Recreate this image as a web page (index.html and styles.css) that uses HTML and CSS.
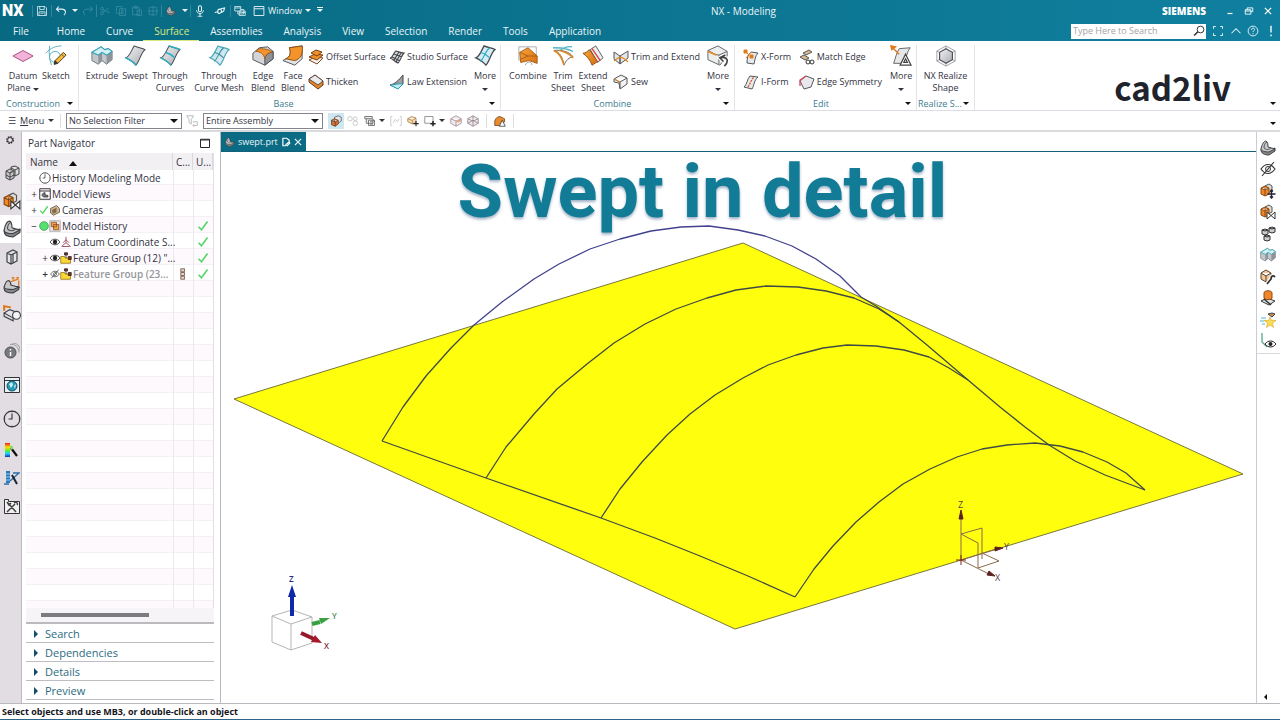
FILE: index.html
```html
<!DOCTYPE html>
<html lang="en">
<head>
<meta charset="utf-8">
<title>NX - Modeling</title>
<link rel="stylesheet" href="styles.css">
</head>
<body>
<svg class="sprite" aria-hidden="true">
  <defs>
    <linearGradient id="metal" x1="0" y1="0" x2="1" y2="1"><stop offset="0" stop-color="#f4f4f6"/><stop offset="1" stop-color="#a9abb0"/></linearGradient>
    <linearGradient id="ice" x1="0" y1="0" x2="1" y2="1"><stop offset="0" stop-color="#b6e3ec"/><stop offset="1" stop-color="#e8ecf0"/></linearGradient>
    <linearGradient id="amber" x1="0" y1="0" x2="1" y2="1"><stop offset="0" stop-color="#f7a53c"/><stop offset="1" stop-color="#d96f10"/></linearGradient>
    <linearGradient id="rainbow" x1="0" y1="0" x2="0" y2="1"><stop offset="0" stop-color="#d22"/><stop offset=".3" stop-color="#fd0"/><stop offset=".55" stop-color="#5e3"/><stop offset=".75" stop-color="#2cf"/><stop offset="1" stop-color="#13a"/></linearGradient>
  </defs>

  <symbol id="save" viewBox="0 0 16 16"><path d="M2 2h10l2 2v10H2zM5 2v4h6V2M4 14V9h8v5M6 11h4" fill="none" stroke="currentColor"/></symbol>
  <symbol id="undo" viewBox="0 0 16 16"><path d="M5 2 2 5.500l3.500 3.500M2 5.500h7c6 0 6 5 3 8" fill="none" stroke="currentColor" stroke-width="1.400"/></symbol>
  <symbol id="redo" viewBox="0 0 16 16"><path d="m11 2 3 3.500L10.500 9M14 5.500H7c-6 0-6 5-3 8" fill="none" stroke="currentColor" stroke-width="1.200"/></symbol>
  <symbol id="cut" viewBox="0 0 16 16"><path d="M5 6 14 10M5 10l8-6" fill="none" stroke="currentColor"/><circle cx="4" cy="5" r="2" fill="none" stroke="currentColor"/><circle cx="4" cy="11" r="2" fill="none" stroke="currentColor"/></symbol>
  <symbol id="copy" viewBox="0 0 16 16"><path d="M2 2h7v9H2zM6 5h8v9H6zM8 8h4M8 11h4" fill="none" stroke="currentColor"/></symbol>
  <symbol id="paste" viewBox="0 0 16 16"><path d="M2 3h9v10H2zM5 1.500h3v3H5zM8 7h6v7H8z" fill="none" stroke="currentColor"/></symbol>
  <symbol id="target" viewBox="0 0 16 16"><path d="M3 3h10v10H3zM8 1v14M1 8h14" fill="none" stroke="currentColor"/></symbol>
  <symbol id="mic" viewBox="0 0 16 16"><rect x="6" y="1" width="4" height="8" rx="2" fill="none" stroke="currentColor" stroke-width="1.400"/><path d="M3.500 7c0 6 9 6 9 0M8 11v4M5 15h6" fill="none" stroke="currentColor" stroke-width="1.200"/></symbol>
  <symbol id="loop" viewBox="0 0 16 16"><path d="M5 9 1 10M5 9c0-5 5-4 5-1s-5 5-5 1zM9 5l5-1-1 4-3 2" fill="none" stroke="currentColor" stroke-width="1.500"/></symbol>
  <symbol id="cascade" viewBox="0 0 16 16"><path d="M1 2h8v6H1zM1 4h8M5 8v4h8V6H9M7 8h8v6H7zM7 10h8" fill="none" stroke="currentColor"/></symbol>
  <symbol id="window" viewBox="0 0 16 16"><path d="M1.500 2h13v12h-13zM1.500 5h13" fill="none" stroke="currentColor" stroke-width="1.200"/></symbol>
  <symbol id="min" viewBox="0 0 16 16"><path d="M4 12h8" stroke="currentColor" stroke-width="2"/></symbol>
  <symbol id="restore" viewBox="0 0 16 16"><path d="M5 6V3h9v6h-3M2 6h9v7H2zM2 8h9" fill="none" stroke="currentColor" stroke-width="1.400"/></symbol>
  <symbol id="close" viewBox="0 0 16 16"><path d="m3 3 10 10M13 3 3 13" stroke="currentColor" stroke-width="2"/></symbol>
  <symbol id="full" viewBox="0 0 16 16"><path d="M2 5V2h3M11 2h3v3M14 11v3h-3M5 14H2v-3" fill="none" stroke="currentColor" stroke-width="1.300"/></symbol>
  <symbol id="up" viewBox="0 0 16 16"><path d="m2 11 6-6 6 6" fill="none" stroke="currentColor" stroke-width="1.400"/></symbol>
  <symbol id="help" viewBox="0 0 16 16"><circle cx="8" cy="8" r="6.500" fill="none" stroke="currentColor" stroke-width="1.200"/><path d="M6 6.500c0-3 4-3 4-.5 0 1.500-2 1.500-2 3.500M8 11v1.300" fill="none" stroke="currentColor" stroke-width="1.300"/></symbol>
  <symbol id="bang" viewBox="0 0 16 16"><path d="M8 1v9M8 12.500V15" stroke="currentColor" stroke-width="2"/></symbol>
  <symbol id="magnify" viewBox="0 0 16 16"><circle cx="10" cy="6" r="4.500" fill="none" stroke="#333" stroke-width="1.300"/><path d="m6.500 9-5 5" stroke="#333" stroke-width="2.200"/></symbol>

  <symbol id="plane" viewBox="0 0 24 24"><path d="m1 12 11-6 11 6-11 6z" fill="#f3b3d8" stroke="#a0487c"/></symbol>
  <symbol id="sketch" viewBox="0 0 24 24"><path d="M1 9C6 3 12 1 18 1M5 1c-1 8 0 15 2 21" fill="none" stroke="#53a9bd"/><circle cx="11" cy="13" r="6" fill="#fff" stroke="#53a9bd"/><path d="m10 21 1-4L20 8l3 3-9 9z" fill="#f5b73c" stroke="#4b3c22"/><path d="m10 21 1-4 3 3zM18 10l3 3" fill="#333" stroke="#333" stroke-width=".7"/></symbol>
  <symbol id="extrude" viewBox="0 0 24 24"><path d="M1 8 11 2l4 3 4-1 4 3v9l-6 5-5-4-4 4-7-4z" fill="#c3c7cb" stroke="#6b747a"/><path d="M8 11v10l4-4V8zM17 11v10l6-5V7z" fill="#8e9499"/><path d="M1 8 11 2l4 3 4-1 4 3-6 4-5-3-4 3z" fill="#d3f0f5" stroke="#35a3b8" stroke-width="1.200"/></symbol>
  <symbol id="swept" viewBox="0 0 24 24"><path d="M2 14C6 13 8 6 11 1c4 2 9 2 12 4-5 4-6 13-10 17-3-4-7-6-11-8z" fill="url(#metal)" stroke="#45484e" stroke-width="1.100"/><path d="M2 14c4 2 8 4 11 8" stroke="#29aec4" stroke-width="1.800" fill="none"/></symbol>
  <symbol id="curves" viewBox="0 0 24 24"><path d="M2 14C6 13 8 6 11 1c4 2 9 2 12 4-5 4-6 13-10 17-3-4-7-6-11-8z" fill="url(#metal)" stroke="#45484e" stroke-width="1.100"/><path d="M2 14c4 2 8 4 11 8M7 8c4 1 7 3 10 6M11 1c4 2 9 2 12 4" stroke="#29aec4" stroke-width="1.600" fill="none"/></symbol>
  <symbol id="mesh" viewBox="0 0 24 24"><path d="M2 14C6 13 8 6 11 1c4 2 9 2 12 4-5 4-6 13-10 17-3-4-7-6-11-8z" fill="url(#ice)" stroke="#4aa9bb" stroke-width="1.300"/><path d="M7 8c4 1 7 3 10 6M17 3c-5 4-6 11-10 15" stroke="#3a8fa2" stroke-width="1.100" fill="none"/></symbol>
  <symbol id="edgeblend" viewBox="0 0 24 24"><path d="M1 9 8 3l9-1 6 5v8l-9 7-13-6z" fill="#d3d5d8" stroke="#4d4d52"/><path d="M14 22v-7c0-4 5-7 9-8v8z" fill="#8e9196" stroke="#4d4d52"/><path d="M4 7 8 4c6 0 12 1 14 4-4 0-8 3-8 7C13 10 9 7 4 7z" fill="#f2932b" stroke="#a5590f"/></symbol>
  <symbol id="faceblend" viewBox="0 0 24 24"><path d="M8 3 22 1v14l-8 7-13-5 5-3c3-2 4-6 2-11z" fill="#e1e2e4" stroke="#4d4d52"/><path d="m8 3 14-2c1 8-1 14-8 16L4 15c5-2 6-6 4-12z" fill="#f2932b" stroke="#8a4a10"/></symbol>
  <symbol id="blueSurf" viewBox="0 0 24 24"><path d="M2 14C6 13 8 6 11 1c4 2 9 2 12 4-5 4-6 13-10 17-3-4-7-6-11-8z" fill="#d6ebf3" stroke="#45484e" stroke-width="1.400"/><path d="M7 8c4 1 7 3 10 6M17 3c-5 4-6 11-10 15" stroke="#29aec4" stroke-width="1.200" fill="none"/></symbol>
  <symbol id="combine" viewBox="0 0 24 24"><path d="M2 2h19v18M2 2v15" fill="none" stroke="#a5a8ac"/><path d="M3 8 12 3l10 9v8l-9-3-9 2z" fill="url(#amber)" stroke="#a65a14"/><path d="m3 8 9 4 10 0M3 16l9-4" fill="none" stroke="#a65a14"/><path d="M9 22c3-6 8-3 7 0" fill="none" stroke="#999"/></symbol>
  <symbol id="trim" viewBox="0 0 24 24"><path d="M1 3c8 0 14 0 22 4M6 8c6-5 10-7 16-6" fill="none" stroke="#53b3c6" stroke-width="1.500"/><path d="M2 6c6 1 10 8 11 16 2-5 6-9 10-9C19 7 10 5 2 6z" fill="#fff" stroke="#555"/><path d="M2 6c5 2 9 8 11 16M8 6c6 1 11 4 15 8" fill="none" stroke="#e58a22" stroke-width="1.800"/></symbol>
  <symbol id="extend" viewBox="0 0 24 24"><path d="m9 5 6-4 8 13-6 5z" fill="#eceef0" stroke="#555"/><path d="M1 9c3 0 5-2 7-4l9 13-6 4C9 16 5 12 1 9z" fill="url(#amber)" stroke="#8a4a10"/><path d="m11 4 9 13" stroke="#d33" stroke-width="1.300"/></symbol>
  <symbol id="boxback" viewBox="0 0 24 24"><path d="M1 6 12 1l10 6v5l-8 10-13-6z" fill="#eceded" stroke="#5b5d62"/><path d="M1 6c5 2 7 5 12 5l9-4M13 11v10" fill="none" stroke="#5b5d62"/><path d="m1 7 9 4" stroke="#e58a22" stroke-width="1.800"/><path d="m20 11-6 3 4 4M14 14c9-2 10 4 5 9" fill="none" stroke="#fff" stroke-width="4"/><path d="m20 11-6 3 4 4M14 14c9-2 10 4 5 9" fill="none" stroke="#444" stroke-width="1.800"/></symbol>
  <symbol id="editmore" viewBox="0 0 24 24"><path d="M4 20C6 14 7 9 10 4l12-1c-4 5-4 11-6 17z" fill="#e6e7e9" stroke="#5b5d62"/><path d="m1 1 9 9M1 1l5 1-4 3z" stroke="#e07a18" stroke-width="1.600" fill="#e07a18"/><path d="m17 10 6 12H11zM17 15l2 4h-4z" fill="#fff" stroke="#444" stroke-width="1.300"/></symbol>
  <symbol id="realize" viewBox="0 0 24 24"><path d="m12 1 10 5.500v11L12 23 2 17.500v-11zM12 1v22M2 6.500l20 11M22 6.500l-20 11" fill="none" stroke="#9a9da4"/><path d="m12 4 7 4v8l-7 4-7-4V8z" fill="url(#metal)" stroke="#505258" stroke-width="1.300"/></symbol>

  <symbol id="offset" viewBox="0 0 16 16"><path d="m1 11 6-3 8 1-6 6z" fill="#f6f0ea" stroke="#7a4a26"/><path d="m1 8 6-3 8 1-6 5z" fill="#f0902a" stroke="#7a3c10"/><path d="m3 4 5-3 6 2-5 4z" fill="#f0902a" stroke="#7a3c10"/></symbol>
  <symbol id="thicken" viewBox="0 0 16 16"><path d="m1 5 6-4 8 6v4l-5 4-9-7z" fill="#e98526" stroke="#5f3b22"/><path d="m1 5 6-4 8 6-5 4z" fill="#e9eaec" stroke="#5f4b42"/></symbol>
  <symbol id="studio" viewBox="0 0 16 16"><path d="M1 9c3 0 3-5 6-7 3 1 5 2 8 2-3 3-3 7-6 10-3-1-5-4-8-5zM3 8l8 4M5 5l8 3M10 3 5 11M12 4 7 13" fill="#dcdde0" stroke="#44464a" stroke-width="1.100"/></symbol>
  <symbol id="law" viewBox="0 0 16 16"><path d="M1 11C6 10 10 6 14 1v9l-6 4z" fill="#9da0a5" stroke="#44464a"/><path d="M1 11c4 0 9-2 13-1l-5 5z" fill="#bfeaf1" stroke="#2a9ab0"/></symbol>
  <symbol id="trimext" viewBox="0 0 16 16"><path d="M1 3l6 4v8L1 10zM7 7l8-5v7l-8 6z" fill="#e4e5e7" stroke="#55575c"/><path d="M1 12c6-6 9-4 14 1" fill="none" stroke="#e58a22" stroke-width="1.200"/></symbol>
  <symbol id="sew" viewBox="0 0 16 16"><path d="M1 5l7-4 6 3v6l-7 5-1-6-5-1zM1 5l6 3 7-4M7 8v6" fill="#f3f3f4" stroke="#55575c"/><path d="m1 5 6 3" stroke="#e58a22"/></symbol>
  <symbol id="xform" viewBox="0 0 16 16"><path d="M4 14c0-5 1-9 4-11l7 1c-3 3-3 7-4 11z" fill="#e8e9ea" stroke="#55575c"/><path d="m2 2 4 4M8 3 3 9M1 1h3v3H1zM7 6h3v3H7z" stroke="#e07a18" fill="#e07a18"/></symbol>
  <symbol id="iform" viewBox="0 0 16 16"><path d="M1 13c3-2 3-8 6-11l8 1c-4 3-4 9-6 12z" fill="#e8e9ea" stroke="#55575c"/><path d="M5 13c2-3 3-7 6-10" stroke="#d3562c" stroke-width="1.300" fill="none" stroke-dasharray="2 1"/></symbol>
  <symbol id="match" viewBox="0 0 16 16"><path d="m4 4 6-3 3 2-6 3zM1 8l4-2 5 3-4 2z" fill="#d8b98a" stroke="#55575c"/><circle cx="9" cy="13" r="2" fill="none" stroke="#333"/><circle cx="13" cy="13" r="2" fill="none" stroke="#333"/></symbol>
  <symbol id="symm" viewBox="0 0 16 16"><path d="m1 7 6-5 8 3-3 8-7 2z" fill="#e9e9eb" stroke="#55575c"/><path d="M1 12V6l6-4" fill="none" stroke="#d9445c" stroke-width="1.300"/></symbol>

  <symbol id="gear" viewBox="0 0 16 16"><circle cx="8" cy="8" r="5" fill="none" stroke="#333" stroke-width="2.600" stroke-dasharray="2.500 1.400"/><circle cx="8" cy="8" r="3.800" fill="#eee" stroke="#333" stroke-width="1.400"/></symbol>
  <symbol id="cubes" viewBox="0 0 16 16"><path d="m7 2 4-1 4 2v6l-4 2-4-2zM7 3l4 2 4-2M11 5v6" fill="#ddd" stroke="#444"/><path d="m2 6 4-2 4 2v7l-4 2-4-2zM2 6l4 2 4-2M6 8v7M2 10l4 2 4-2" fill="#c3c4c6" stroke="#444"/></symbol>
  <symbol id="constraint" viewBox="0 0 16 16"><path d="m5 3 4-2 3 2v5l-4 2-3-2z" fill="#ddd" stroke="#555"/><path d="m1 5 4-2 4 2v6l-4 2-4-2zM1 5l4 2 4-2M5 7v6" fill="#f0862a" stroke="#8a4a10"/><path d="M7 8v7l8-7v7z" fill="#fff" stroke="#333"/></symbol>
  <symbol id="part" viewBox="0 0 16 16"><path d="M1 10c0-2 2-3 3-3l5 3 6-2v3l-6 4c-5 0-8-2-8-5z" fill="#85878b" stroke="#3f4145"/><path d="M1 9c1-5 3-8 5-8 2 1 2 4 2 6l7 2-6 3c-4 0-8-1-8-3z" fill="#c6c8ca" stroke="#3f4145"/><path d="M4 8c0-3 1-5 3-6M4 8c2 2 5 2 7 0" fill="none" stroke="#55575b"/></symbol>
  <symbol id="book" viewBox="0 0 16 16"><path d="m3 4 6-3 4 2v9l-6 3-4-2zM3 4l4 2 6-3M7 6v9M9 5v9" fill="#e3e4e6" stroke="#3f4145" stroke-width="1.200"/></symbol>
  <symbol id="partsnap" viewBox="0 0 16 16"><path d="M1 11c0-2 2-3 3-3l5 3 5-2v3l-5 3c-5 0-8-1-8-4z" fill="#85878b" stroke="#3f4145"/><path d="M1 10c1-4 2-6 4-6 2 1 2 3 2 4l7 2-5 2c-4 0-8 0-8-2z" fill="#c6c8ca" stroke="#3f4145"/><path d="m8 1 2 2m0-2L8 3m4-2 2 2m0-2-2 2M14 4v4M7 5l6-2" fill="none" stroke="#e07a18" stroke-width="1.200"/></symbol>
  <symbol id="layers" viewBox="0 0 16 16"><path d="m1 8 5-3 8 3-4 5zM1 8v3l8 4v-3" fill="#e3e4e6" stroke="#3f4145"/><circle cx="12" cy="10" r="3.500" fill="#f4f4f4" stroke="#3f4145"/><path d="M1 6V2l6 1" fill="none" stroke="#e07a18" stroke-width="1.800"/></symbol>
  <symbol id="info" viewBox="0 0 16 16"><circle cx="6.500" cy="9.500" r="5.500" fill="#77797d" stroke="#4e5054"/><path d="M6.500 9v4M6.500 6v1.500" stroke="#fff" stroke-width="1.500"/><path d="M6 1.500c5-1 9 3 9 8M8 0c5 0 8 3 8 7" fill="none" stroke="#999"/></symbol>
  <symbol id="web" viewBox="0 0 16 16"><path d="M.5.500h15v15H.5zM.5 3.500h15" fill="#e6f2f5" stroke="#333"/><circle cx="8" cy="9" r="5" fill="#2a9bb4" stroke="#134e66"/><path d="m5 7 3-2 1 3-2 3M10 9l2-2-1 5" fill="#c9f0f4"/></symbol>
  <symbol id="clock" viewBox="0 0 16 16"><circle cx="8" cy="8" r="7" fill="none" stroke="#333"/><path d="M8 3v5H5M8 1v1M8 14v1M1 8h1M14 8h1" fill="none" stroke="#333"/></symbol>
  <symbol id="palette" viewBox="0 0 16 16"><path d="M1 1h5v14H1z" fill="url(#rainbow)"/><path d="m7 6 6 8" stroke="#111" stroke-width="2.200"/><path d="M6 4c3-1 3 1 3 3L7 8z" fill="#7be052"/></symbol>
  <symbol id="manikin" viewBox="0 0 16 16"><path d="M2 1h4v12H2z" fill="#2b78b8"/><path d="M2 4h4M2 7h4M2 10h4" stroke="#9fd0ea"/><path d="m6 11 9-8H9M0 14h5" stroke="#2f6ea8" stroke-width="1.300" fill="none"/><path d="m8 5 5 9" stroke="#1a2430" stroke-width="2"/></symbol>
  <symbol id="tools" viewBox="0 0 16 16"><path d="M.5 1.500h4v2h11v12H.5z" fill="#f1f1f2" stroke="#333"/><path d="m3 14 8-8M4 5l8 9M10 5c3-2 4 1 3 2M3 4l2 3 2-2" fill="none" stroke="#444" stroke-width="1.500"/></symbol>

  <symbol id="eye" viewBox="0 0 16 16"><path d="M0 8c4-6 12-6 16 0-4 6-12 6-16 0z" fill="#fff" stroke="#222" stroke-width="1.300"/><circle cx="8" cy="8" r="3.500" fill="#222"/></symbol>
  <symbol id="eyeoff" viewBox="0 0 16 16"><path d="M1 8c4-6 10-6 14 0-4 6-10 6-14 0zM2 15 14 1" fill="none" stroke="#333" stroke-width="1.100"/><circle cx="8" cy="8" r="2.500" fill="none" stroke="#333"/></symbol>
  <symbol id="cubeMove" viewBox="0 0 16 16"><path d="m5 3 4-2 3 2v5l-4 2-3-2z" fill="#ddd" stroke="#555"/><path d="m1 5 4-2 4 2v6l-4 2-4-2zM1 5l4 2 4-2M5 7v6" fill="#f0862a" stroke="#8a4a10"/><path d="M11.500 7v8M7.500 11h8M10 8.500 11.500 7 13 8.500M10 13.500l1.500 1.500 1.500-1.500" fill="none" stroke="#223" stroke-width="1.400"/></symbol>
  <symbol id="chain" viewBox="0 0 16 16"><path d="m9 2 3-1 3 1v4l-3 1-3-1zM2 4l3-1 3 1v4L5 9 2 8zM4 10l3-1 3 1v4l-3 1-3-1z" fill="#ccc" stroke="#333"/><path d="m2 4 3 1 3-1M4 10l3 1 3-1M9 2l3 1 3-1" fill="none" stroke="#333"/></symbol>
  <symbol id="cubeWrench" viewBox="0 0 16 16"><path d="m1 4 5-3 5 3v6l-5 3-5-3zM1 4l5 3 5-3M6 7v6" fill="#f3c79a" stroke="#5b4633"/><path d="m7 15 4-5c0-3 2-4 4-2" fill="none" stroke="#fff" stroke-width="4"/><path d="m7 15 4-5c0-3 2-4 4-2" fill="none" stroke="#333" stroke-width="1.800"/></symbol>
  <symbol id="wrenchUp" viewBox="0 0 16 16"><path d="m1 11 6-3 8 3-6 4z" fill="#e3e4e6" stroke="#333"/><path d="M4 3c0-3 8-3 8 0v5c0 2-8 2-8 0z" fill="#f0862a" stroke="#8a4a10"/><path d="m4 9 7 6" stroke="#333" stroke-width="1.600"/></symbol>
  <symbol id="star" viewBox="0 0 16 16"><path d="m10 5 1.500 3.500H16L12.500 11l1 4.500L10 13l-3.500 2.500L7.500 11 4 8.500h4.500z" fill="#fbdc55" stroke="#d9a520" stroke-width=".6"/><path d="M1 6h5M0 9h4M2 12h3" stroke="#4bb3d8"/><path d="m8 2 4-1 3 1-3 3z" fill="#d98b3e" stroke="#345"/></symbol>
  <symbol id="csyseye" viewBox="0 0 16 16"><path d="M2 0v9l5 5" fill="none" stroke="#58a88a" stroke-width="1.300"/><path d="M5 11c3-4 8-4 11 0-3 4-8 4-11 0z" fill="#fff" stroke="#222"/><circle cx="10.500" cy="11" r="2" fill="#222"/></symbol>

  <symbol id="funnel" viewBox="0 0 16 16"><path d="M1 1h9L7 6v6L4 10V6zM9 9h6v5h-5M11 12l-2 2 2 2" fill="none" stroke="#b4b4ba" stroke-width="1.200"/></symbol>
  <symbol id="cubeSel" viewBox="0 0 16 16"><path d="m6 3 5-2 4 2v5l-4 3H6z" fill="#e6e6e8" stroke="#4e4e58"/><path d="m2 7 4-2 5 2v5l-4 3-5-2zM2 7l5 2 4-2M7 9v6" fill="#d9712e" stroke="#5e3e28"/></symbol>
  <symbol id="gearsOff" viewBox="0 0 16 16"><circle cx="4" cy="5" r="3" fill="none" stroke="#bbb"/><circle cx="11" cy="5" r="2.500" fill="none" stroke="#bbb"/><circle cx="11" cy="11" r="3" fill="none" stroke="#bbb"/></symbol>
  <symbol id="filterList" viewBox="0 0 16 16"><path d="M1 2h10v3H1zM3 5v6h9V5M6 7h8v7H6zM8 9h4M8 12h4" fill="#eee" stroke="#555"/></symbol>
  <symbol id="bracket" viewBox="0 0 16 16"><path d="M3 2H1v12h2M13 2h2v12h-2M4 11l3-5 3 3 2-4" fill="none" stroke="#bbb"/></symbol>
  <symbol id="cubeTarget" viewBox="0 0 16 16"><path d="m1 5 5-3 6 2v6l-5 2-6-3zM1 5l6 2 5-3M7 7v5" fill="#f5d9b5" stroke="#a87a3c"/><path d="M12 8v7M8.500 11.500h7" stroke="#222" stroke-width="1.400"/></symbol>
  <symbol id="rectTarget" viewBox="0 0 16 16"><path d="M1 2h11v9H1z" fill="none" stroke="#777"/><path d="M12 8v7M8.500 11.500h7" stroke="#222" stroke-width="2"/></symbol>
  <symbol id="cubeGhost" viewBox="0 0 16 16"><path d="m1 5 7-4 7 4v6l-7 4-7-4zM1 5l7 3 7-3M8 8v7" fill="#f2eaed" stroke="#97878f"/><path d="m8 8 7-3v3l-4 2z" fill="#e2a58c"/></symbol>
  <symbol id="cubeWire" viewBox="0 0 16 16"><path d="m1 5 7-4 7 4v6l-7 4-7-4zM1 5l7 3 7-3M8 8v7M8 1v6M1 11l7-4 7 4" fill="#efe6ea" stroke="#8b7c86"/></symbol>
  <symbol id="edgeTool" viewBox="0 0 16 16"><path d="M1 8c1-4 4-6 7-6l6 3v4l-5 5H1z" fill="#e88a2e" stroke="#6b4020"/><path d="m11 7 4 8H7z" fill="#fff" stroke="#333"/></symbol>
  <symbol id="views" viewBox="0 0 16 16"><path d="M1 1h14v14H1zM1 4h14" fill="#fff" stroke="#333" stroke-width="1.300"/><path d="M4 10c0-3 3-4 4-4v3l4 1v2H6z" fill="#777" stroke="#333"/></symbol>
  <symbol id="check" viewBox="0 0 16 16"><path d="m2 9 4 4 8-11" fill="none" stroke="#58d668" stroke-width="2.200"/></symbol>
  <symbol id="camera" viewBox="0 0 16 16"><path d="m2 6 8-4 4 4v5l-8 4-4-3z" fill="#d0b48c" stroke="#5f4d38"/><path d="m4 8 6-3v6l-5 2z" fill="#7d6a4d"/></symbol>
  <symbol id="dot" viewBox="0 0 16 16"><circle cx="8" cy="8" r="7" fill="#55e070" stroke="#2b8c3c"/></symbol>
  <symbol id="history" viewBox="0 0 16 16"><path d="M1 1h14v14H1z" fill="#e8e8ea" stroke="#999"/><path d="M3 3h7v6H3zM6 6h7v7H6z" fill="#f2a04a" stroke="#8a4a20"/></symbol>
  <symbol id="csys" viewBox="0 0 16 16"><path d="M8 1v8l-6 5M8 9l6 5M4 9l4-4 4 4M3 14h10" fill="none" stroke="#a2536c" stroke-width="1.300"/></symbol>
  <symbol id="folder" viewBox="0 0 16 16"><path d="M1 6h5l1 2h7v7H1z" fill="#fbd836" stroke="#8a6d10"/><path d="M6 1h4v3H6zM8 4v4M11 6h4v4h-4z" fill="#8c2c20" stroke="#222"/></symbol>
  <symbol id="stack" viewBox="0 0 8 16"><path d="M1 1h5v4H1zM1 6h5v4H1zM1 11h5v4H1z" fill="#e6d3c6" stroke="#6a4a3c"/></symbol>
  <symbol id="maximize" viewBox="0 0 16 16"><path d="M2 3h12v11H2zM2 4h12" fill="none" stroke="#222" stroke-width="1.300"/></symbol>
  <symbol id="note" viewBox="0 0 16 16"><path d="M13 8V5l-4-3H3v12h5M8 12l5-4 1 2-4 4z" fill="none" stroke="#fff" stroke-width="1.900"/></symbol>
</svg>

<div class="app">
<header class="topbar">
  <div class="titlebar">
    <span class="logo">NX</span>
    <div class="quick">
      <i class="vbar"></i>
      <button class="qbtn" aria-label="Save"><svg class="ic12"><use href="#save"/></svg></button>
      <i class="vbar"></i>
      <button class="qbtn" aria-label="Undo"><svg class="ic12"><use href="#undo"/></svg></button>
      <button class="qbtn narrow" aria-label="Undo list"><i class="caret"></i></button>
      <button class="qbtn faint" aria-label="Redo"><svg class="ic12"><use href="#redo"/></svg></button>
      <i class="vbar"></i>
      <button class="qbtn faint" aria-label="Cut"><svg class="ic12"><use href="#cut"/></svg></button>
      <button class="qbtn faint" aria-label="Copy"><svg class="ic12"><use href="#copy"/></svg></button>
      <button class="qbtn faint" aria-label="Paste"><svg class="ic12"><use href="#paste"/></svg></button>
      <button class="qbtn faint" aria-label="Locate"><svg class="ic12"><use href="#target"/></svg></button>
      <i class="vbar"></i>
      <button class="qbtn" aria-label="Part"><svg class="ic10"><use href="#part"/></svg></button>
      <button class="qbtn narrow" aria-label="Part list"><i class="caret"></i></button>
      <i class="vbar"></i>
      <button class="qbtn" aria-label="Voice"><svg class="ic12"><use href="#mic"/></svg></button>
      <button class="qbtn wide" aria-label="Touch mode"><svg class="ic12"><use href="#loop"/></svg></button>
      <i class="vbar"></i>
      <button class="qbtn" aria-label="Switch window"><svg class="ic12"><use href="#cascade"/></svg></button>
      <button class="qbtn window"><svg class="ic12"><use href="#window"/></svg>Window<i class="caret"></i></button>
      <button class="qbtn narrow" aria-label="Toolbar options"><i class="caret barred"></i></button>
    </div>
    <span class="apptitle">NX - Modeling</span>
    <span class="siemens">SIEMENS</span>
    <div class="winbtns">
      <button aria-label="Minimize"><svg class="ic10"><use href="#min"/></svg></button>
      <button aria-label="Restore"><svg class="ic10"><use href="#restore"/></svg></button>
      <button aria-label="Close"><svg class="ic10"><use href="#close"/></svg></button>
    </div>
  </div>
  <div class="menubar">
    <nav class="menus">
      <button class="menu file">File</button>
      <button class="menu">Home</button>
      <button class="menu">Curve</button>
      <button class="menu current">Surface</button>
      <button class="menu">Assemblies</button>
      <button class="menu">Analysis</button>
      <button class="menu">View</button>
      <button class="menu">Selection</button>
      <button class="menu">Render</button>
      <button class="menu">Tools</button>
      <button class="menu">Application</button>
    </nav>
    <div class="search">
      <input type="text" placeholder="Type Here to Search" aria-label="Search commands">
      <svg class="ic12"><use href="#magnify"/></svg>
    </div>
    <div class="helpers">
      <button aria-label="Full screen"><svg class="ic12"><use href="#full"/></svg></button>
      <button aria-label="Minimize ribbon"><svg class="ic12"><use href="#up"/></svg></button>
      <button aria-label="Help"><svg class="ic12"><use href="#help"/></svg></button>
      <button aria-label="Alerts"><svg class="ic12"><use href="#bang"/></svg></button>
    </div>
  </div>
</header>

<section class="ribbon">
  <div class="group g-construction">
    <div class="tools">
      <button class="tool"><svg class="ic24"><use href="#plane"/></svg><span>Datum<br>Plane <i class="caret"></i></span></button>
      <button class="tool slim"><svg class="ic24"><use href="#sketch"/></svg><span>Sketch</span></button>
    </div>
    <div class="gname">Construction<i class="caret"></i></div>
  </div>
  <div class="group g-base">
    <div class="tools">
      <button class="tool"><svg class="ic24"><use href="#extrude"/></svg><span>Extrude</span></button>
      <button class="tool slim"><svg class="ic24"><use href="#swept"/></svg><span>Swept</span></button>
      <button class="tool roomy"><svg class="ic24"><use href="#curves"/></svg><span>Through<br>Curves</span></button>
      <button class="tool broad"><svg class="ic24"><use href="#mesh"/></svg><span>Through<br>Curve Mesh</span></button>
      <button class="tool slim"><svg class="ic24"><use href="#edgeblend"/></svg><span>Edge<br>Blend</span></button>
      <button class="tool slim"><svg class="ic24"><use href="#faceblend"/></svg><span>Face<br>Blend</span></button>
      <div class="smallcol c-offset">
        <button class="small"><svg class="ic16"><use href="#offset"/></svg>Offset Surface</button>
        <button class="small"><svg class="ic16"><use href="#thicken"/></svg>Thicken</button>
      </div>
      <div class="smallcol c-studio">
        <button class="small"><svg class="ic16"><use href="#studio"/></svg>Studio Surface</button>
        <button class="small"><svg class="ic16"><use href="#law"/></svg>Law Extension</button>
      </div>
      <button class="tool slim"><svg class="ic24"><use href="#blueSurf"/></svg><span>More<br><i class="caret"></i></span></button>
    </div>
    <div class="gname">Base<i class="caret"></i></div>
  </div>
  <div class="group g-combine">
    <div class="tools">
      <button class="tool roomy"><svg class="ic24"><use href="#combine"/></svg><span>Combine</span></button>
      <button class="tool slim"><svg class="ic24"><use href="#trim"/></svg><span>Trim<br>Sheet</span></button>
      <button class="tool slim"><svg class="ic24"><use href="#extend"/></svg><span>Extend<br>Sheet</span></button>
      <div class="smallcol c-trim">
        <button class="small"><svg class="ic16"><use href="#trimext"/></svg>Trim and Extend</button>
        <button class="small"><svg class="ic16"><use href="#sew"/></svg>Sew</button>
      </div>
      <button class="tool slim"><svg class="ic24"><use href="#boxback"/></svg><span>More<br><i class="caret"></i></span></button>
    </div>
    <div class="gname">Combine<i class="caret"></i></div>
  </div>
  <div class="group g-edit">
    <div class="tools">
      <div class="smallcol c-form">
        <button class="small"><svg class="ic16"><use href="#xform"/></svg>X-Form</button>
        <button class="small"><svg class="ic16"><use href="#iform"/></svg>I-Form</button>
      </div>
      <div class="smallcol c-match">
        <button class="small"><svg class="ic16"><use href="#match"/></svg>Match Edge</button>
        <button class="small"><svg class="ic16"><use href="#symm"/></svg>Edge Symmetry</button>
      </div>
      <button class="tool slim"><svg class="ic24"><use href="#editmore"/></svg><span>More<br><i class="caret"></i></span></button>
    </div>
    <div class="gname">Edit<i class="caret"></i></div>
  </div>
  <div class="group g-realize">
    <div class="tools">
      <button class="tool broad"><svg class="ic24"><use href="#realize"/></svg><span>NX Realize<br>Shape</span></button>
    </div>
    <div class="gname">Realize S...<i class="caret"></i></div>
  </div>
  <div class="brand">cad2liv</div>
  <button class="overflow" aria-label="Ribbon options"><i class="caret"></i></button>
</section>

<section class="selbar">
  <button class="mainmenu"><span class="burger">☰</span><span><u>M</u>enu</span><i class="caret"></i></button>
  <i class="vline"></i>
  <div class="combo"><select aria-label="Selection filter"><option>No Selection Filter</option></select></div>
  <button class="sbtn" aria-label="Reset filter"><svg class="ic12"><use href="#funnel"/></svg></button>
  <div class="combo scope"><select aria-label="Selection scope"><option>Entire Assembly</option></select></div>
  <div class="seltools">
    <button class="sbtn on" aria-label="Body"><svg class="ic12"><use href="#cubeSel"/></svg></button>
    <button class="sbtn" aria-label="Components"><svg class="ic12"><use href="#gearsOff"/></svg></button>
    <button class="sbtn pair" aria-label="Filter list"><svg class="ic12"><use href="#filterList"/></svg><i class="caret"></i></button>
    <button class="sbtn" aria-label="Chain"><svg class="ic12"><use href="#bracket"/></svg></button>
    <button class="sbtn" aria-label="Pick body"><svg class="ic12"><use href="#cubeTarget"/></svg></button>
    <button class="sbtn pair" aria-label="Pick rectangle"><svg class="ic12"><use href="#rectTarget"/></svg><i class="caret"></i></button>
    <button class="sbtn" aria-label="Shaded"><svg class="ic12"><use href="#cubeGhost"/></svg></button>
    <button class="sbtn" aria-label="Wireframe"><svg class="ic12"><use href="#cubeWire"/></svg></button>
    <i class="vline"></i>
    <button class="sbtn" aria-label="Edge tool"><svg class="ic12"><use href="#edgeTool"/></svg></button>
    <i class="vline"></i>
  </div>
  <button class="overflow" aria-label="Bar options"><i class="caret"></i></button>
</section>

<main class="body">
  <nav class="rail">
    <button class="gearbtn" aria-label="Settings"><svg class="ic10"><use href="#gear"/></svg></button>
    <div class="railset tight">
      <button aria-label="Assembly navigator"><svg class="ic16"><use href="#cubes"/></svg></button>
      <button aria-label="Constraint navigator"><svg class="ic18"><use href="#constraint"/></svg></button>
      <button class="active" aria-label="Part navigator"><svg class="ic18"><use href="#part"/></svg></button>
      <button aria-label="Reuse library"><svg class="ic16"><use href="#book"/></svg></button>
      <button aria-label="Part snapshots"><svg class="ic18"><use href="#partsnap"/></svg></button>
      <button aria-label="Layers"><svg class="ic18"><use href="#layers"/></svg></button>
    </div>
    <div class="railset loose">
      <button aria-label="Information"><svg class="ic16"><use href="#info"/></svg></button>
      <button aria-label="Web browser"><svg class="ic16"><use href="#web"/></svg></button>
      <button aria-label="History"><svg class="ic18"><use href="#clock"/></svg></button>
    </div>
    <div class="railset tight">
      <button aria-label="Materials"><svg class="ic16"><use href="#palette"/></svg></button>
      <button aria-label="Roles"><svg class="ic16"><use href="#manikin"/></svg></button>
      <button aria-label="Utilities"><svg class="ic16"><use href="#tools"/></svg></button>
    </div>
  </nav>

  <aside class="navigator">
    <div class="navhead"><h2>Part Navigator</h2><button aria-label="Maximize"><svg class="ic12"><use href="#maximize"/></svg></button></div>
    <div class="treebox">
      <table class="tree">
        <colgroup><col><col class="c-narrow"><col class="c-narrow"></colgroup>
        <thead><tr><th>Name <i class="sortup"></i></th><th>C...</th><th>U...</th></tr></thead>
        <tbody>
          <tr><td><div class="node"><i class="tw"></i><svg class="ic12"><use href="#clock"/></svg><span>History Modeling Mode</span></div></td><td></td><td></td></tr>
          <tr><td><div class="node"><i class="tw">+</i><svg class="ic12"><use href="#views"/></svg><span>Model Views</span></div></td><td></td><td></td></tr>
          <tr><td><div class="node"><i class="tw">+</i><svg class="ic10"><use href="#check"/></svg><svg class="ic12"><use href="#camera"/></svg><span>Cameras</span></div></td><td></td><td></td></tr>
          <tr><td><div class="node"><i class="tw">−</i><svg class="ic10"><use href="#dot"/></svg><svg class="ic12"><use href="#history"/></svg><span>Model History</span></div></td><td></td><td><svg class="ic12"><use href="#check"/></svg></td></tr>
          <tr><td><div class="node deep"><i class="tw"></i><svg class="ic10"><use href="#eye"/></svg><svg class="ic12"><use href="#csys"/></svg><span>Datum Coordinate S...</span></div></td><td></td><td><svg class="ic12"><use href="#check"/></svg></td></tr>
          <tr><td><div class="node deep"><i class="tw">+</i><svg class="ic10"><use href="#eye"/></svg><svg class="ic12"><use href="#folder"/></svg><span>Feature Group (12) "...</span></div></td><td></td><td><svg class="ic12"><use href="#check"/></svg></td></tr>
          <tr><td><div class="node deep dim"><i class="tw">+</i><svg class="ic10"><use href="#eyeoff"/></svg><svg class="ic12"><use href="#folder"/></svg><span>Feature Group (23...</span></div></td><td><svg class="stackic"><use href="#stack"/></svg></td><td><svg class="ic12"><use href="#check"/></svg></td></tr>
        </tbody>
      </table>
    </div>
    <div class="hscroll"><div class="thumb"></div></div>
    <div class="folds">
      <button class="fold"><i></i>Search</button>
      <button class="fold"><i></i>Dependencies</button>
      <button class="fold"><i></i>Details</button>
      <button class="fold"><i></i>Preview</button>
    </div>
  </aside>

  <section class="stage">
    <div class="tabs">
      <button class="tab"><svg class="ic10"><use href="#part"/></svg><span>swept.prt</span><svg class="ic10"><use href="#note"/></svg><svg class="ic10"><use href="#close"/></svg></button>
    </div>
    <div class="canvas">
      <svg class="model" viewBox="221 152 1035 551" role="img" aria-label="Swept model">
        <path d="M234 399 743 243 1243 474 735 629z" fill="#ffff0d" stroke="#77773c"/>
        <g fill="none" stroke-width="1.300" stroke-linejoin="round">
          <g stroke="#3f4a45">
            <path d="M382 441 486 478 601 518 655 538 700 556 748 576 795 597"/>
            <path d="M382 441 403 407 426 376 451 348 474 325"/>
            <path d="M861 297 876 306 899 322 927 345 968 380 1000 407 1025 427 1049 445 1075 461 1105 475 1145 490"/>
            <path d="M486 478 506 447 534 414 557 389 587 364 614 343 645 324 676 309 707 298 736 290 766 286 798 287 826 291 854 298 879 309 899 322"/>
            <path d="M601 518 620 489 642 462 667 435 690 414 715 395 743 378 768 365 796 355 823 348 847 345 876 346 904 350 929 357 949 368 968 380"/>
            <path d="M795 597 814 569 833 546 856 522 879 502 903 484 930 469 957 457 982 449 1007 445 1035 443 1060 446 1083 452 1107 462 1126 473 1145 490"/>
          </g>
          <path stroke="#41418f" d="M474 325 502 302 534 279 559 264 590 249 620 239 651 231 681 227 709 226 738 230 765 236 792 246 816 259 840 276 861 297"/>
        </g>
        <g fill="none" stroke="#8a6a4c">
          <path d="M961 560V516M961 534l21-6v31M961 534l17 9v25M961 560l30 15M961 560l38-12M982 553l17 8-21 7"/>
          <path d="M956 560h10M961 555v10" stroke="#7c2418"/>
          <path d="m961 510 2 9h-4zM1003 548l-8-1v4zM995 576l-8-1 2-4z" fill="#5c2020" stroke="#5c2020"/>
        </g>
        <g class="axis"><text x="958" y="508">Z</text><text x="1004" y="550">Y</text><text x="995" y="581">X</text></g>
        <path d="M272 616 292 610 312 617V643L291 650 272 642zM272 616l19 8 21-7M291 624v26" fill="#fff" stroke="#b5b5b5"/>
        <path d="M292 616v-20" stroke="#1029a8" stroke-width="4"/><path d="m292 585 4 12h-8z" fill="#1029a8"/>
        <path d="m312 624 8-2" stroke="#3aa043" stroke-width="4"/><path d="m330 618-11 0 2 6z" fill="#3aa043"/>
        <path d="m301 633 13 6" stroke="#96182c" stroke-width="4"/><path d="m322 643-11-1 4-7z" fill="#a8182c"/>
        <g class="axis triad"><text x="289" y="582" fill="#1f2f86">Z</text><text x="332" y="619" fill="#4f8a58">Y</text><text x="324" y="649" fill="#7c2f3c">X</text></g>
      </svg>
      <h1 class="headline">Swept in detail</h1>
    </div>
  </section>

  <nav class="siderail">
    <div class="sidelist">
      <button aria-label="Show part"><svg class="ic16"><use href="#part"/></svg></button>
      <button aria-label="Hide"><svg class="ic16"><use href="#eyeoff"/></svg></button>
      <button aria-label="Move component"><svg class="ic16"><use href="#cubeMove"/></svg></button>
      <button aria-label="Assembly constraints"><svg class="ic16"><use href="#constraint"/></svg></button>
      <button aria-label="Pattern component"><svg class="ic16"><use href="#chain"/></svg></button>
      <button aria-label="Extrude"><svg class="ic16"><use href="#extrude"/></svg></button>
      <button aria-label="Edit body"><svg class="ic16"><use href="#cubeWrench"/></svg></button>
      <button aria-label="Edit feature"><svg class="ic16"><use href="#wrenchUp"/></svg></button>
      <button aria-label="Effects"><svg class="ic16"><use href="#star"/></svg></button>
      <button aria-label="Show CSYS"><svg class="ic16"><use href="#csyseye"/></svg></button>
    </div>
    <button class="sidemore" aria-label="More"><i></i></button>
  </nav>
</main>
<footer class="status">Select objects and use MB3, or double-click an object</footer>
</div>
</body>
</html>
```
FILE: styles.css
```css
* { box-sizing: border-box; }
body {
  margin: 0;
  font-family: "Open Sans", "Noto Sans", sans-serif;
  font-size: 10px;
  line-height: 12px;
  color: #33333f;
  background: #fff;
}
button {
  font: inherit;
  color: inherit;
  background: none;
  border: 0;
  padding: 0;
  margin: 0;
  display: flex;
  align-items: center;
  justify-content: center;
  white-space: nowrap;
}
svg { flex: none; display: block; }
.sprite { position: absolute; width: 0; height: 0; }
.ic10 { width: 10px; height: 10px; }
.ic12 { width: 12px; height: 12px; }
.ic16 { width: 16px; height: 16px; }
.ic18 { width: 18px; height: 18px; }
.ic24 { width: 22px; height: 22px; }
.caret {
  display: inline-block;
  border: 3px solid transparent;
  border-top-color: currentColor;
  border-bottom: 0;
}
.app { display: flex; flex-direction: column; height: 100vh; }

/* title and menus */
.topbar {
  color: #e9f5f8;
  background: linear-gradient(90deg, #086a82, #107f9f);
}
.titlebar { display: flex; align-items: center; height: 21px; }
.logo { width: 32px; padding-left: 2px; font: 900 16px/20px Roboto, sans-serif; color: #fff; }
.quick { display: flex; align-items: center; }
.vbar { width: 1px; height: 12px; background: #2f879b; }
.qbtn { width: 16px; height: 20px; margin: 0 1px; }
.qbtn.narrow { width: 8px; }
.qbtn.wide { width: 19px; }
.qbtn.faint { color: #3b8fa3; width: 14px; }
.qbtn.window { width: auto; margin: 0 4px; font-size: 9px; gap: 3px; }
.barred::before { content: ""; position: absolute; width: 6px; height: 1px; margin: -5px 0 0 -3px; background: currentColor; }
.apptitle { flex: 1; text-align: center; }
.siemens { font: 800 10px/20px "Open Sans", sans-serif; color: #fff; }
.winbtns { display: flex; width: 74px; padding: 0 2px 0 14px; color: #fff; }
.winbtns button { flex: 1; height: 20px; }
.menubar { display: flex; align-items: center; height: 20px; }
.menus { display: flex; flex: 1; }
.menu { height: 20px; padding: 0 10px 0 11px; border-bottom: 1px solid transparent; }
.menu.file { padding: 0 17px 0 13px; }
.menu.current { color: #d9e87c; border-bottom-color: #d9e87c; }
.search { display: flex; align-items: center; width: 135px; height: 15px; padding-right: 1px; background: #fff; }
.search input { flex: 1; min-width: 0; border: 0; outline: 0; padding: 0 2px; font: 9px/14px "Open Sans", sans-serif; background: none; }
.search input::placeholder { color: #a3a3a3; opacity: 1; }
.helpers { display: flex; width: 74px; padding-left: 3px; }
.helpers button { flex: 1; }

/* ribbon */
.ribbon { display: flex; height: 70px; padding-top: 4px; border-bottom: 1px solid #dcdce4; font-size: 9px; }
.group { display: flex; flex-direction: column; flex: none; border-right: 1px solid #e3e3e8; }
.tools { display: flex; flex: 1; align-items: flex-start; }
.tool { flex-direction: column; width: 36px; }
.tool svg { margin-bottom: 3px; }
.tool.slim { width: 30px; }
.tool.roomy { width: 40px; }
.tool.broad { width: 58px; }
.gname { display: flex; align-items: center; justify-content: center; height: 13px; margin-left: -6px; color: #3c7c90; }
.gname .caret { color: #111; margin-left: auto; margin-right: 5px; }
.gname::before { content: ""; margin-right: auto; }
.g-construction { width: 79px; padding-left: 5px; }
.g-construction .gname, .g-realize .gname { margin-left: 1px; }
.g-construction .gname::before, .g-realize .gname::before { display: none; }
.g-base { width: 422px; padding-left: 5px; }
.g-combine { width: 234px; padding-left: 7px; }
.g-edit { width: 182px; padding-left: 8px; }
.g-realize { width: 58px; }
.smallcol { display: flex; flex-direction: column; gap: 1px; }
.small { height: 24px; gap: 2px; justify-content: flex-start; }
.c-offset { width: 81px; }
.c-studio { width: 81px; }
.c-trim { width: 90px; margin-left: 5px; }
.c-form { width: 56px; }
.c-match { width: 88px; }
.brand {
  flex: 1;
  text-align: right;
  align-self: center;
  padding-top: 19px;
  margin-right: 35px;
  font: 700 33px/40px "Noto Sans CJK SC", "Open Sans", sans-serif;
  color: #20222c;
}
.overflow { width: 14px; align-self: flex-end; height: 14px; color: #111; }

/* selection bar */
.selbar { display: flex; align-items: center; height: 21px; border-bottom: 2px solid #dadadd; font-size: 9px; }
.mainmenu { width: 56px; gap: 4px; justify-content: flex-start; padding-left: 8px; }
.burger { font-family: "DejaVu Sans", sans-serif; }
.vline { width: 1px; height: 14px; background: #dddde2; margin: 0 4px; }
.combo { position: relative; width: 116px; height: 16px; margin-left: 1px; border: 1px solid #83838c; }
.combo.scope { width: 120px; }
.combo select { appearance: none; width: 100%; height: 14px; border: 0; padding: 0 2px; background: none; font: inherit; color: inherit; }
.combo::after { content: ""; position: absolute; right: 3px; top: 5px; border: 4px solid transparent; border-top-color: #111; border-bottom: 0; }
.sbtn { width: 16px; height: 16px; margin: 0 2px; }
.sbtn.on { background: #cfe8f0; }
.seltools { display: flex; align-items: center; flex: 1; gap: 1px; padding-left: 5px; }
.seltools .sbtn { margin: 0; }
.seltools .sbtn.pair { width: 25px; gap: 3px; }

/* body */
.body { display: flex; flex: 1; min-height: 0; }
.rail { width: 22px; background: #e1dde2; border-right: 1px solid #bdb9c0; }
.rail button { width: 100%; padding-left: 2px; }
.rail .gearbtn { height: 16px; padding: 0 2px 0 0; }
.railset.tight { padding-top: 11px; }
.railset.tight button { height: 28px; }
.railset.loose { padding-top: 7px; }
.railset.loose button { height: 34px; }
.railset.loose + .railset { padding-top: 0; }
.rail .active { background: #fff; }
.navigator { display: flex; flex-direction: column; width: 199px; padding: 0 6px 3px 4px; border-right: 1px solid #b9b9c0; }
.navhead { display: flex; align-items: center; justify-content: space-between; height: 21px; padding: 0 3px 0 2px; }
.navhead h2 { margin: 0; font: inherit; }
.treebox {
  flex: 1;
  min-height: 0;
  overflow: hidden;
  border-right: 1px solid #e3dfe6;
  background:
    linear-gradient(#ebe8ee, #ebe8ee) right 39px top / 1px 100% no-repeat,
    linear-gradient(#ebe8ee, #ebe8ee) right 19px top / 1px 100% no-repeat,
    repeating-linear-gradient(#fdf9fd 0 15px, #f3f1f5 15px 16px, #fff 16px 31px, #f3f1f5 31px 32px);
}
.tree { width: 100%; table-layout: fixed; border-collapse: collapse; }
.c-narrow { width: 20px; }
.tree th, .tree td { height: 16px; padding: 0; text-align: left; font-weight: 400; white-space: nowrap; }
.tree th { height: 17px; background: #f3f0f4; border-right: 1px solid #dcd8e0; padding-left: 4px; }
.tree th + th { padding-left: 3px; }
.tree td + td svg { margin: 0 auto; }
.sortup { display: inline-block; margin-left: 8px; border: 4px solid transparent; border-bottom: 5px solid #111; border-top: 0; }
.stackic { width: 6px; height: 12px; }
.node { display: flex; align-items: center; height: 15px; padding-left: 3px; }
.node span { margin-left: 1px; }
.node.deep { padding-left: 14px; }
.node.dim { color: #95959b; font-weight: 600; }
.tw { flex: none; width: 10px; font-style: normal; text-align: center; color: #333; }
.hscroll { height: 16px; padding: 5px 0 0 15px; background: #f6f4f7; border-bottom: 2px solid #bcb9bf; }
.thumb { width: 108px; height: 4px; background: #7d7b80; }
.folds { display: flex; flex-direction: column; }
.fold { height: 19px; justify-content: flex-start; gap: 7px; padding: 2px 0 0 8px; font-size: 11px; color: #2b6b80; border-bottom: 1px solid #bfbcc2; }
.fold i { border: 4px solid transparent; border-left: 4px solid #134e64; border-right: 0; }

.stage { display: flex; flex-direction: column; flex: 1; min-width: 0; }
.tabs { display: flex; height: 20px; border-bottom: 1px solid #12607a; }
.tab { gap: 2px; padding: 0 3px 0 4px; font-size: 9px; color: #e9f5f8; background: #0b6a84; }
.tab span { margin: 0 1px; }
.canvas { position: relative; flex: 1; min-height: 0; }
.model { width: 100%; height: 100%; }
.axis { font: 9px "Open Sans", sans-serif; fill: #55443c; }
.triad { font-weight: 600; font-size: 8px; fill: unset; }
.headline {
  position: absolute;
  top: 0;
  left: 0;
  width: 100%;
  margin: 0;
  padding-right: 72px;
  text-align: center;
  font: 700 74px/80px Roboto, sans-serif;
  color: #127b96;
  text-shadow: 0 2px 3px #9fb0c4;
}
.siderail { display: flex; flex-direction: column; width: 24px; border-left: 1px solid #c9ccd6; }
.sidelist { display: flex; flex-direction: column; height: 222px; padding: 5px 1px 1px 0; border-bottom: 1px solid #d8d8dc; }
.sidelist button { flex: 1; }
.sidemore { margin-top: auto; height: 12px; width: 16px; }
.sidemore i { border: 3px solid transparent; border-right-color: #111; border-left: 0; }
.status { height: 17px; padding-left: 2px; border-top: 1px solid #b9b9c0; border-bottom: 1px solid #2f6488; font: 700 9px/15px "Open Sans", sans-serif; color: #15151c; }
```
